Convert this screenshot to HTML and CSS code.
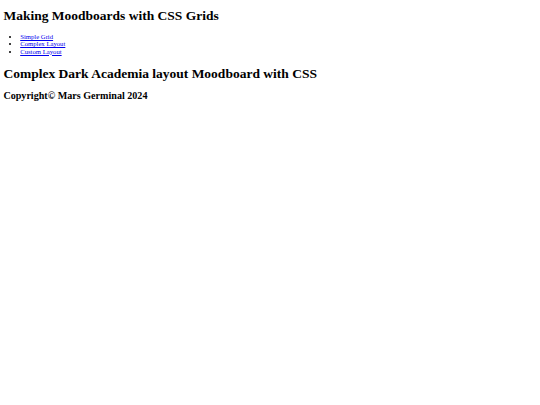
FILE: index.html
```html
<!DOCTYPE html>
<html lang="en">
<head>
<meta charset="utf-8">
<title>Making Moodboards with CSS Grids</title>
<link rel="stylesheet" href="styles.css">
</head>
<body class="page">
  <header class="site-header">
    <h1 class="title">Making Moodboards with CSS Grids</h1>
    <nav class="nav">
      <ul class="nav-list">
        <li class="nav-item"><a class="nav-link" href="#simple">Simple Grid</a></li>
        <li class="nav-item"><a class="nav-link" href="#complex">Complex Layout</a></li>
        <li class="nav-item"><a class="nav-link" href="#custom">Custom Layout</a></li>
      </ul>
    </nav>
  </header>
  <main class="content">
    <h1 class="title title-main">Complex Dark Academia layout Moodboard with CSS</h1>
  </main>
  <footer class="footer">
    <h2 class="copyright">Copyright© Mars Germinal 2024</h2>
  </footer>
</body>
</html>
```

FILE: styles.css
```css
html {
  background: #ffffff;
}
.page {
  margin: 0;
  padding: 8px 3.4px;
  font-family: "Liberation Serif", "Times New Roman", serif;
  font-size: 6.7px;
  color: #000000;
}
.title {
  font-size: 13.5px;
  line-height: 15.5px;
  font-weight: bold;
  margin: 0 0 9.5px;
}
.title-main {
  margin: 11px 0 0;
}
.nav-list {
  margin: 0;
  padding-left: 16.8px;
  list-style: disc;
}
.nav-item {
  font-size: 6.7px;
  line-height: 7.4px;
}
.nav-link {
  color: #0000ee;
  text-decoration: underline;
}
.copyright {
  font-size: 10.1px;
  line-height: 11.6px;
  font-weight: bold;
  margin: 8.5px 0 0;
}
```
